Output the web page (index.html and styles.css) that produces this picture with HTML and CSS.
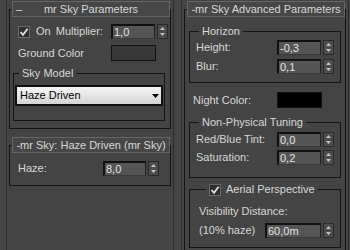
FILE: index.html
```html
<!DOCTYPE html>
<html>

<head>
    <title>mr Sky</title>
    <meta name="viewport" content="width=device-width, initial-scale=1">
    <link rel="stylesheet" href="styles.css">
</head>

<body>
    <div class="column">
        <div class="panel">
            <div class="rollout">
                <div class="rollout-head">
                    <span class="dash">–</span>
                    <span class="title">mr Sky Parameters</span>
                </div>
                <div class="rollout-body sky-params">
                    <div class="row">
                        <span class="checkbox">
                            <svg width="10" height="10" viewBox="0 0 10 10"><path d="M1.5 5 L4 7.8 L8.6 1.8" /></svg>
                        </span>
                        <span class="on-label">On</span>
                        <span class="push">Multiplier:</span>
                        <div class="spin">
                            <span class="field">1,0</span>
                            <svg class="arrows" width="11" height="15" viewBox="0 0 11 15">
                                <rect x="0.5" y="0.5" width="10" height="14" />
                                <path d="M3 6 L8 6 L5.5 3 Z M3 9 L8 9 L5.5 12 Z" />
                            </svg>
                        </div>
                    </div>
                    <div class="row color-row">
                        <span>Ground Color</span>
                        <span class="swatch ground"></span>
                    </div>
                    <fieldset class="group sky-model">
                        <legend>Sky Model</legend>
                        <div class="dropdown">
                            <span>Haze Driven</span>
                            <svg width="7" height="4" viewBox="0 0 7 4"><path d="M0 0 L7 0 L3.5 4 Z" /></svg>
                        </div>
                    </fieldset>
                </div>
            </div>

            <div class="rollout second">
                <div class="rollout-head">
                    <span></span>
                    <span class="title">-mr Sky: Haze Driven (mr Sky)</span>
                </div>
                <div class="rollout-body haze-params">
                    <div class="row haze-row">
                        <span>Haze:</span>
                        <div class="spin">
                            <span class="field narrow">8,0</span>
                            <svg class="arrows" width="11" height="15" viewBox="0 0 11 15">
                                <rect x="0.5" y="0.5" width="10" height="14" />
                                <path d="M3 6 L8 6 L5.5 3 Z M3 9 L8 9 L5.5 12 Z" />
                            </svg>
                        </div>
                    </div>
                </div>
            </div>
        </div>
    </div>

    <div class="column">
        <div class="panel">
            <div class="rollout">
                <div class="rollout-head">
                    <span></span>
                    <span class="title">-mr Sky Advanced Parameters</span>
                </div>
                <div class="rollout-body advanced">
                    <fieldset class="group horizon">
                        <legend>Horizon</legend>
                        <div class="row">
                            <span>Height:</span>
                            <div class="spin">
                                <span class="field">-0,3</span>
                                <svg class="arrows" width="11" height="15" viewBox="0 0 11 15">
                                    <rect x="0.5" y="0.5" width="10" height="14" />
                                    <path d="M3 6 L8 6 L5.5 3 Z M3 9 L8 9 L5.5 12 Z" />
                                </svg>
                            </div>
                        </div>
                        <div class="row">
                            <span>Blur:</span>
                            <div class="spin">
                                <span class="field">0,1</span>
                                <svg class="arrows" width="11" height="15" viewBox="0 0 11 15">
                                    <rect x="0.5" y="0.5" width="10" height="14" />
                                    <path d="M3 6 L8 6 L5.5 3 Z M3 9 L8 9 L5.5 12 Z" />
                                </svg>
                            </div>
                        </div>
                    </fieldset>

                    <div class="row color-row night-row">
                        <span>Night Color:</span>
                        <span class="swatch night"></span>
                    </div>

                    <fieldset class="group tuning">
                        <legend>Non-Physical Tuning</legend>
                        <div class="row">
                            <span>Red/Blue Tint:</span>
                            <div class="spin">
                                <span class="field">0,0</span>
                                <svg class="arrows" width="11" height="15" viewBox="0 0 11 15">
                                    <rect x="0.5" y="0.5" width="10" height="14" />
                                    <path d="M3 6 L8 6 L5.5 3 Z M3 9 L8 9 L5.5 12 Z" />
                                </svg>
                            </div>
                        </div>
                        <div class="row">
                            <span>Saturation:</span>
                            <div class="spin">
                                <span class="field">0,2</span>
                                <svg class="arrows" width="11" height="15" viewBox="0 0 11 15">
                                    <rect x="0.5" y="0.5" width="10" height="14" />
                                    <path d="M3 6 L8 6 L5.5 3 Z M3 9 L8 9 L5.5 12 Z" />
                                </svg>
                            </div>
                        </div>
                    </fieldset>

                    <fieldset class="group aerial">
                        <legend>
                            <span class="checkbox">
                                <svg width="10" height="10" viewBox="0 0 10 10"><path d="M1.5 5 L4 7.8 L8.6 1.8" /></svg>
                            </span>
                            <span>Aerial Perspective</span>
                        </legend>
                        <div class="text-line">Visibility Distance:</div>
                        <div class="row">
                            <span>(10% haze)</span>
                            <div class="spin">
                                <span class="field wide">60,0m</span>
                                <svg class="arrows" width="11" height="15" viewBox="0 0 11 15">
                                    <rect x="0.5" y="0.5" width="10" height="14" />
                                    <path d="M3 6 L8 6 L5.5 3 Z M3 9 L8 9 L5.5 12 Z" />
                                </svg>
                            </div>
                        </div>
                    </fieldset>
                </div>
            </div>
        </div>
    </div>
</body>

</html>
```

FILE: styles.css
```css
:root {
    --bg: #444444;
    --text: #d8d8d8;
    --field-text: #e4e4e4;
    --frame: #2e2e2e;
    --border-dark: #141414;
    --head-border: #666666;
    --head-bg: #474747;
    --field-bg: #555555;
}

body {
    margin: 0;
    background-color: var(--bg);
    color: var(--text);
    font-family: "Liberation Sans", Arial, sans-serif;
    font-size: 11px;
    display: flex;
    height: 250px;
    overflow: hidden;
}

.column {
    width: 175px;
    box-sizing: border-box;
    padding: 0 1px 0 6px;
    display: flex;
}

.panel {
    flex: 1;
    border-left: 1px solid var(--frame);
    border-right: 1px solid var(--frame);
    padding: 1px 2px 0;
}

/* rollout header sits over the top edge of the rollout frame */
.rollout-head {
    position: relative;
    z-index: 1;
    height: 16px;
    box-sizing: border-box;
    margin: 0 1px 0 3px;
    border: 1px solid var(--head-border);
    background-color: var(--head-bg);
    display: grid;
    grid-template-columns: 1fr auto 1fr;
    align-items: center;
    line-height: 14px;
    white-space: nowrap;
}

.rollout-head .dash {
    padding-left: 3px;
}

.rollout-body {
    margin-top: -8px;
    border: 1px solid var(--border-dark);
}

.rollout.second {
    margin-top: 8px;
}

.sky-params {
    padding: 14px 0 7px;
}

.haze-params {
    padding: 15px 0 9px;
}

.advanced {
    padding: 15px 0 30px;
}

.row {
    display: flex;
    align-items: center;
    height: 15px;
    line-height: 15px;
    white-space: nowrap;
}

.sky-params .row {
    padding: 0 2px 0 8px;
}

.on-label {
    margin-left: 6px;
}

.push {
    margin-left: auto;
    margin-right: 3px;
}

.spin {
    display: flex;
    gap: 2px;
    margin-left: auto;
}

.field {
    width: 44px;
    height: 15px;
    box-sizing: border-box;
    background-color: var(--field-bg);
    border-top: 2px solid #111111;
    border-left: 2px solid #111111;
    border-right: 1px solid #222222;
    border-bottom: 1px solid #3a3a3a;
    padding-left: 1px;
    line-height: 12px;
    color: var(--field-text);
}

.field.narrow {
    width: 43px;
}

.field.wide {
    width: 56px;
}

.arrows rect {
    fill: #4c4c4c;
    stroke: #2a2a2a;
}

.arrows path {
    fill: #c4c4c4;
}

.checkbox {
    width: 12px;
    height: 12px;
    box-sizing: border-box;
    border: 1px solid #6a6a6a;
    background-color: #2e2e2e;
    display: flex;
    align-items: center;
    justify-content: center;
}

.checkbox path {
    fill: none;
    stroke: #e2e2e2;
    stroke-width: 1.8;
}

.color-row {
    margin-top: 6px;
    height: 16px;
}

.swatch {
    width: 45px;
    height: 16px;
    box-sizing: border-box;
    margin-left: auto;
    border: 1px solid #111111;
}

.swatch.ground {
    background-color: #383838;
    margin-right: 12px;
}

.swatch.night {
    background-color: #000000;
}

.night-row {
    margin-top: 9px;
    padding: 0 23px 0 8px;
}

.group {
    min-width: 0;
    border: 1px solid var(--border-dark);
    display: flex;
    flex-direction: column;
}

.group legend {
    margin-left: 3px;
    padding: 0 3px;
    line-height: 13px;
    white-space: nowrap;
}

.sky-model {
    margin: 6px 5px 0 3px;
    padding: 5px 1px 14px;
}

.sky-model legend {
    margin-left: 4px;
}

.dropdown {
    height: 21px;
    box-sizing: border-box;
    border: 2px solid #101010;
    background: linear-gradient(#f6f6f6, #d4d4d4);
    color: #000000;
    display: flex;
    align-items: center;
    justify-content: space-between;
    padding: 0 2px 0 3px;
    line-height: 13px;
}

.haze-row {
    padding: 0 11px 0 8px;
}

.horizon {
    margin: 0 4px;
    padding: 2px 6px 8px;
    gap: 4px;
}

.tuning {
    margin: 8px 4px 0;
    padding: 3px 6px 12px;
    gap: 3px;
}

.aerial {
    margin: 5px 4px 0;
    padding: 8px 6px 9px 9px;
}

.aerial legend {
    display: flex;
    align-items: center;
    gap: 5px;
    margin-left: 7px;
}

.text-line {
    line-height: 15px;
    margin-bottom: 4px;
}
```
